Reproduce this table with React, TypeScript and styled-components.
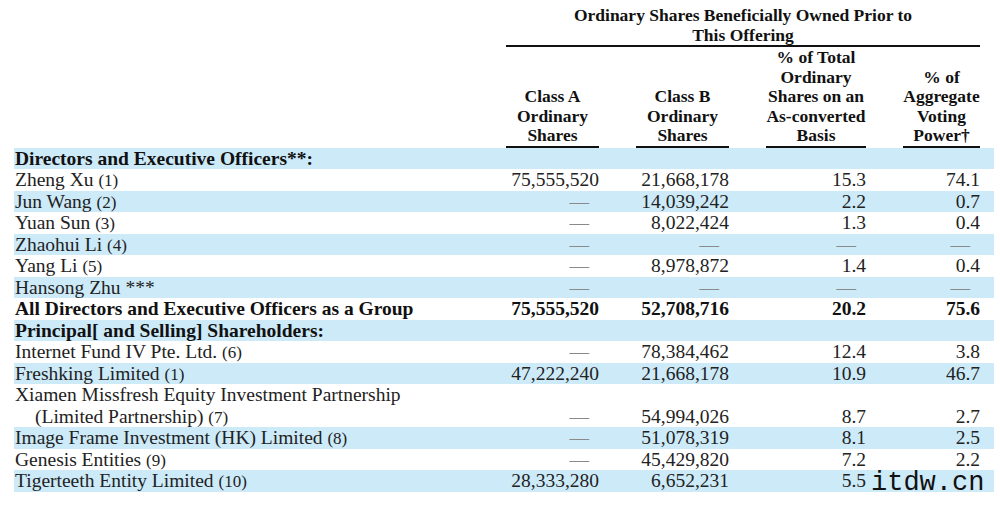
import React from "react";
import styled, { createGlobalStyle } from "styled-components";

const Global = createGlobalStyle`
  html, body { margin: 0; padding: 0; background: #ffffff; }
  body { font-family: "Liberation Serif", "Times New Roman", serif; color: #1c1c1c; }
`;

const Page = styled.div`
  position: relative;
  width: 1000px;
  height: 506px;
  overflow: hidden;
  background: #fff;
`;

const Table = styled.div`
  margin-left: 14px;
  width: 980px;
  padding-top: 6px;
`;

const Grid = styled.div`
  display: grid;
  grid-template-columns: 454px 93px 93px 100px 77px;
  column-gap: 37px;
  padding: 0 14px 0 1px;
`;

const HeadRow = styled(Grid)`
  align-items: end;
`;

const GroupTitle = styled.div`
  grid-column: 2 / 6;
  text-align: center;
  font-weight: 700;
  font-size: 17.5px;
  line-height: 19.5px;
  color: #111;
  border-bottom: 2px solid #111;
`;

const ColTitle = styled.div`
  text-align: center;
  font-weight: 700;
  font-size: 17.5px;
  line-height: 19.6px;
  color: #111;
  white-space: nowrap;
  border-bottom: 2px solid #111;
  padding-top: 1px;
`;

const BodyRow = styled(Grid)<{ $striped: boolean; $bold: boolean }>`
  align-items: end;
  background: ${(p) => (p.$striped ? "#cdeaf9" : "transparent")};
  font-size: 19.5px;
  line-height: 21.5px;
  font-weight: ${(p) => (p.$bold ? 700 : 400)};
  color: ${(p) => (p.$bold ? "#111" : "#222")};
`;

const Label = styled.div`
  white-space: nowrap;
`;

const Line = styled.div`
  height: 21.5px;
`;

const Indent = styled(Line)`
  padding-left: 20px;
`;

const Note = styled.span`
  font-size: 17px;
  line-height: 1;
`;

const Num = styled.div`
  text-align: right;
  white-space: nowrap;
  height: 21.5px;
`;

const Dash = styled(Num)`
  padding-right: 10px;
  color: #8a8a8a;
`;

const Watermark = styled.div`
  position: absolute;
  left: 871px;
  top: 473px;
  font-family: "Liberation Mono", "Courier New", monospace;
  font-size: 27px;
  line-height: 20px;
  color: #111;
  white-space: nowrap;
`;

type Row = {
  label: string;
  note?: string;
  second?: string;
  values: (string | null)[];
  kind: "section" | "bold" | "normal";
};

const rows: Row[] = [
  { label: "Directors and Executive Officers**:", values: ["", "", "", ""], kind: "section" },
  { label: "Zheng Xu", note: "(1)", values: ["75,555,520", "21,668,178", "15.3", "74.1"], kind: "normal" },
  { label: "Jun Wang", note: "(2)", values: [null, "14,039,242", "2.2", "0.7"], kind: "normal" },
  { label: "Yuan Sun", note: "(3)", values: [null, "8,022,424", "1.3", "0.4"], kind: "normal" },
  { label: "Zhaohui Li", note: "(4)", values: [null, null, null, null], kind: "normal" },
  { label: "Yang Li", note: "(5)", values: [null, "8,978,872", "1.4", "0.4"], kind: "normal" },
  { label: "Hansong Zhu ***", values: [null, null, null, null], kind: "normal" },
  { label: "All Directors and Executive Officers as a Group", values: ["75,555,520", "52,708,716", "20.2", "75.6"], kind: "bold" },
  { label: "Principal[ and Selling] Shareholders:", values: ["", "", "", ""], kind: "section" },
  { label: "Internet Fund IV Pte. Ltd.", note: "(6)", values: [null, "78,384,462", "12.4", "3.8"], kind: "normal" },
  { label: "Freshking Limited", note: "(1)", values: ["47,222,240", "21,668,178", "10.9", "46.7"], kind: "normal" },
  {
    label: "Xiamen Missfresh Equity Investment Partnership",
    second: "(Limited Partnership)",
    note: "(7)",
    values: [null, "54,994,026", "8.7", "2.7"],
    kind: "normal",
  },
  { label: "Image Frame Investment (HK) Limited", note: "(8)", values: [null, "51,078,319", "8.1", "2.5"], kind: "normal" },
  { label: "Genesis Entities", note: "(9)", values: [null, "45,429,820", "7.2", "2.2"], kind: "normal" },
  { label: "Tigerteeth Entity Limited", note: "(10)", values: ["28,333,280", "6,652,231", "5.5", ""], kind: "normal" },
];

const headers = [
  ["Class A", "Ordinary", "Shares"],
  ["Class B", "Ordinary", "Shares"],
  ["% of Total", "Ordinary", "Shares on an", "As-converted", "Basis"],
  ["% of", "Aggregate", "Voting", "Power\u2020"],
];

function Lines({ lines }: { lines: string[] }) {
  return (
    <>
      {lines.map((l, i) => (
        <React.Fragment key={i}>
          {i > 0 && <br />}
          {l}
        </React.Fragment>
      ))}
    </>
  );
}

export default function App() {
  return (
    <Page>
      <Global />
      <Table>
        <HeadRow>
          <div />
          <GroupTitle>
            Ordinary Shares Beneficially Owned Prior to
            <br />
            This Offering
          </GroupTitle>
        </HeadRow>
        <HeadRow>
          <div />
          {headers.map((h, i) => (
            <ColTitle key={i}>
              <Lines lines={h} />
            </ColTitle>
          ))}
        </HeadRow>
        {rows.map((r, i) => (
          <BodyRow key={i} $striped={i % 2 === 0} $bold={r.kind !== "normal"}>
            <Label>
              {r.second ? (
                <>
                  <Line>{r.label}</Line>
                  <Indent>
                    {r.second} {r.note && <Note>{r.note}</Note>}
                  </Indent>
                </>
              ) : (
                <Line>
                  {r.label}
                  {r.note && (
                    <>
                      {" "}
                      <Note>{r.note}</Note>
                    </>
                  )}
                </Line>
              )}
            </Label>
            {r.values.map((v, j) =>
              v === null ? <Dash key={j}>—</Dash> : <Num key={j}>{v}</Num>
            )}
          </BodyRow>
        ))}
      </Table>
      <Watermark>itdw.cn</Watermark>
    </Page>
  );
}
